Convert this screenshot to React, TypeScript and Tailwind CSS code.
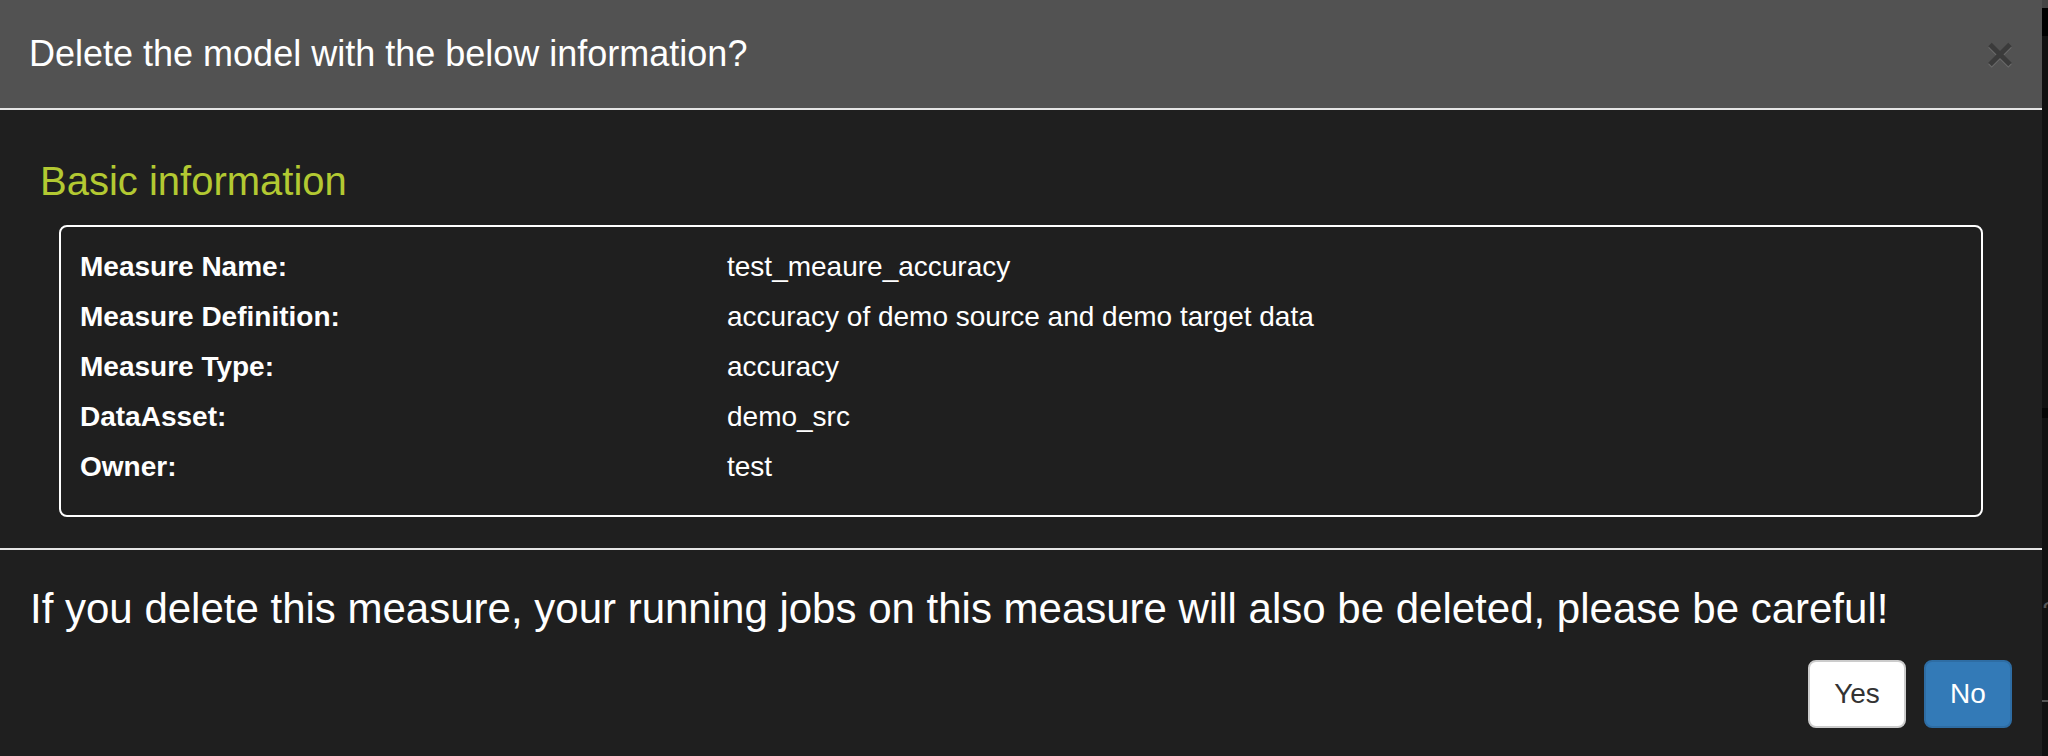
import React from "react";

const rows: [string, string][] = [
  ["Measure Name:", "test_meaure_accuracy"],
  ["Measure Definition:", "accuracy of demo source and demo target data"],
  ["Measure Type:", "accuracy"],
  ["DataAsset:", "demo_src"],
  ["Owner:", "test"],
];

function CloseIcon() {
  return (
    <svg width="26" height="27" viewBox="0 0 26 27" className="block">
      <g stroke="#6a6a6a" strokeWidth="5" strokeLinecap="butt">
        <line x1="3" y1="4" x2="23" y2="24" />
        <line x1="23" y1="4" x2="3" y2="24" />
      </g>
      <g stroke="#3b3b3b" strokeWidth="5" strokeLinecap="butt">
        <line x1="3" y1="2.5" x2="23" y2="22.5" />
        <line x1="23" y1="2.5" x2="3" y2="22.5" />
      </g>
    </svg>
  );
}

export default function App() {
  return (
    <div
      className="flex h-[756px] w-[2048px] overflow-hidden bg-[#0f0f0f] text-white"
      style={{ fontFamily: '"Liberation Sans", Arial, sans-serif' }}
    >
      {/* modal */}
      <div className="flex w-[2042px] flex-col bg-[#1f1f1f]">
        <div className="flex h-[108px] items-center justify-between bg-[#525252] pl-[29px] pr-[29px]">
          <h4 className="text-[36px] leading-[40px] text-white">
            Delete the model with the below information?
          </h4>
          <button className="mt-[2px]">
            <CloseIcon />
          </button>
        </div>
        <div className="h-[2px] bg-[#e5e5e5]" />

        <div className="px-[59px] pt-[49px] pb-[31px]">
          <h5 className="-ml-[19px] text-[40px] leading-[44px] text-[#b3c932]">
            Basic information
          </h5>
          <div className="mt-[22px] rounded-[8px] border-2 border-white pt-[15px] pb-[23px] pl-[19px]">
            {rows.map(([label, value]) => (
              <div key={label} className="flex h-[50px] items-center text-[28px] leading-[50px]">
                <div className="w-[647px] font-bold">{label}</div>
                <div>{value}</div>
              </div>
            ))}
          </div>
        </div>
        <div className="h-[2px] bg-[#e5e5e5]" />

        <div className="px-[30px] pt-[35px]">
          <p className="text-[42px] leading-[48px] text-white">
            If you delete this measure, your running jobs on this measure will also be deleted, please be careful!
          </p>
          <div className="mt-[27px] flex justify-end gap-[18px]">
            <button className="h-[68px] w-[98px] rounded-[8px] border-2 border-[#cccccc] bg-white text-[28px] text-[#333333]">
              Yes
            </button>
            <button className="h-[68px] w-[88px] rounded-[8px] border-2 border-[#2e6da4] bg-[#337ab7] text-[28px] text-white">
              No
            </button>
          </div>
        </div>
      </div>

      {/* sliver of the page behind */}
      <div className="flex w-[6px] flex-col bg-[#111111]">
        <div className="h-[8px] bg-[#454545]" />
        <div className="h-[28px] bg-[#000000]" />
        <div className="h-[372px]" />
        <div className="h-[10px] bg-[#050505]" />
        <div className="h-[190px] overflow-hidden">
          <div className="pt-[180px] text-[28px] leading-[28px] text-[#555555]">8</div>
        </div>
        <div className="mt-[92px] h-[2px] bg-[#555555]" />
      </div>
    </div>
  );
}
